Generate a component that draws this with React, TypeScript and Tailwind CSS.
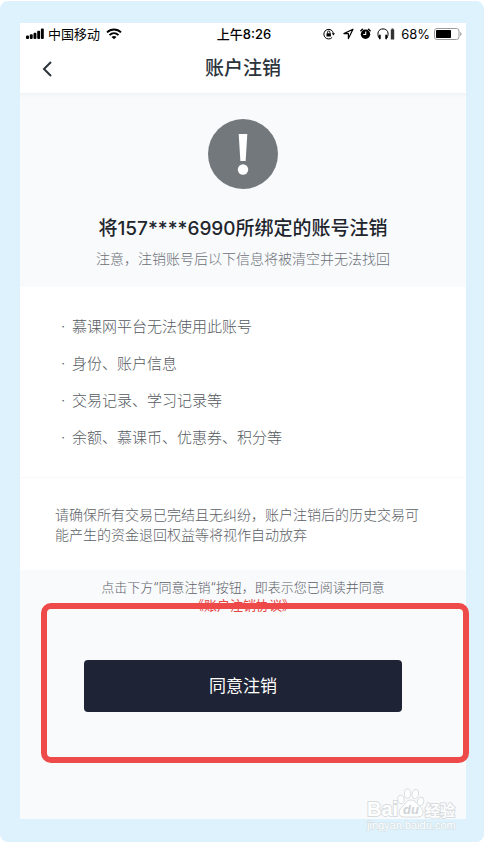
import React from "react";

const losses = [
  "慕课网平台无法使用此账号",
  "身份、账户信息",
  "交易记录、学习记录等",
  "余额、慕课币、优惠券、积分等",
];

function SignalIcon() {
  return (
    <svg width="18" height="12" viewBox="0 0 18 12" fill="currentColor" aria-hidden="true">
      <rect x="0" y="7.5" width="3" height="3.5" rx="1" />
      <rect x="3.8" y="6.3" width="2.9" height="4.7" rx="1" />
      <rect x="7.5" y="4.8" width="2.9" height="6.2" rx="1" />
      <rect x="11.2" y="2.8" width="2.9" height="8.2" rx="1" />
      <rect x="14.9" y="0.5" width="2.9" height="10.5" rx="1" />
    </svg>
  );
}

function WifiIcon() {
  return (
    <svg width="16" height="12" viewBox="0 0 16 12" aria-hidden="true">
      <g fill="none" stroke="currentColor" strokeWidth="1.9">
        <path d="M1 4.4C5 0.5 11 0.5 15 4.4" />
        <path d="M3.5 7.1C6.1 4.6 9.9 4.6 12.5 7.1" />
      </g>
      <path d="M8 11.2 5.5 8.9C6.9 7.6 9.1 7.6 10.5 8.9Z" fill="currentColor" />
    </svg>
  );
}

function RotationLockIcon() {
  return (
    <svg width="12" height="12" viewBox="0 0 12 12" fill="none" stroke="currentColor" aria-hidden="true">
      <path d="M9.2 9.4A4.8 4.8 0 1 1 10.4 5.4" strokeWidth="1" />
      <path d="M8.8 5.2H12L10.4 7.4Z" fill="currentColor" stroke="none" />
      <rect x="3.5" y="5.2" width="4.4" height="3.4" rx="0.4" fill="currentColor" stroke="none" />
      <path d="M4.5 5.4V4.2A1.2 1.2 0 0 1 6.9 4.2V5.4" strokeWidth="0.9" />
    </svg>
  );
}

function LocationIcon() {
  return (
    <svg width="11" height="12" viewBox="0 0 11 12" fill="none" stroke="currentColor" strokeWidth="1.2" strokeLinejoin="round" aria-hidden="true">
      <path d="M10 1.2 0.9 5.6H5.4V10.6Z" />
    </svg>
  );
}

function AlarmIcon() {
  return (
    <svg width="11" height="12" viewBox="0 0 11 12" aria-hidden="true">
      <circle cx="5.5" cy="6.2" r="4.7" fill="currentColor" />
      <path d="M0.9 2.8 2.5 1.2M10.1 2.8 8.5 1.2" stroke="currentColor" strokeWidth="1.5" strokeLinecap="round" />
      <path d="M5.7 3.4V6.5H3.2" fill="none" stroke="#fff" strokeWidth="1.1" />
    </svg>
  );
}

function HeadphonesIcon() {
  return (
    <svg width="18" height="12" viewBox="0 0 18 12" aria-hidden="true">
      <path d="M2 10C-0.5 5 1.6 0.9 6 0.9C10.4 0.9 12.5 5 10 10" fill="none" stroke="currentColor" strokeWidth="1" />
      <rect x="2" y="6.6" width="1.7" height="4.8" rx="0.8" fill="currentColor" />
      <rect x="8.3" y="6.6" width="1.7" height="4.8" rx="0.8" fill="currentColor" />
      <path d="M14.6 0.5H16.4V1.4H17.2V11.4H13.8V1.4H14.6Z" fill="#333" />
    </svg>
  );
}

function BatteryIcon() {
  return (
    <svg width="28" height="12" viewBox="0 0 28 12" aria-hidden="true">
      <rect x="0.5" y="0.5" width="24.5" height="11" rx="2.5" fill="none" stroke="#9b9b9b" />
      <rect x="2" y="2" width="15" height="8" rx="0.8" fill="currentColor" />
      <path d="M26.2 4V8Q27.6 7.4 27.6 6T26.2 4Z" fill="#9b9b9b" />
    </svg>
  );
}

function Watermark() {
  return (
    <svg
      className="pointer-events-none absolute right-6 bottom-2"
      width="94"
      height="48"
      viewBox="0 0 94 48"
      role="img"
      aria-label="Baidu 经验"
    >
      <g fill="#fdfefe" stroke="#d9dcde" strokeWidth="1" fontFamily="'Liberation Sans', 'Noto Sans CJK SC', sans-serif">
        <g paintOrder="stroke">
          <text x="1" y="30" fontSize="20" fontWeight="700" strokeWidth="1.8">Bai</text>
          <text x="59" y="30" fontSize="15" fontWeight="700" strokeWidth="1.8">经验</text>
          <text x="1" y="43" fontSize="11" strokeWidth="1.2" stroke="#d3dfe5">jingyan.baidu.com</text>
        </g>
        <ellipse cx="35" cy="13.500" rx="3.2" ry="4.3" transform="rotate(-12 35 13.500)" />
        <ellipse cx="41.5" cy="7.5" rx="3.2" ry="4.7" />
        <ellipse cx="49.3" cy="8" rx="3.2" ry="4.7" transform="rotate(12 49.3 8)" />
        <ellipse cx="54.5" cy="15.5" rx="3.2" ry="4.3" transform="rotate(20 54.5 15.5)" />
        <path d="M45 14C40.500 14 39.500 18 36.500 20.500C31.500 24.500 32 31 38 31H52C58 31 58.500 24.500 54 20.500C51 18 49.500 14 45 14Z" />
        <text x="37" y="28" fontSize="13" fontWeight="700" fontStyle="italic" fill="#cfd3d6" stroke="none">du</text>
      </g>
    </svg>
  );
}

export default function App() {
  return (
    <div className="flex min-h-screen flex-col bg-white pt-px font-['Inter','Noto_Sans_CJK_SC',sans-serif]">
      <div className="relative flex flex-1 flex-col rounded-lg bg-[#ddf2fc] pt-[22px] pr-[18px] pb-[23px] pl-5">
        <main className="flex flex-1 flex-col bg-white">
          <div className="grid h-[22px] grid-cols-[1fr_auto_1fr] items-center pr-1 pl-1.5 text-[13px] leading-[22px] text-black">
            <div className="flex items-center">
              <SignalIcon />
              <span className="ml-1 mr-1.5">中国移动</span>
              <WifiIcon />
            </div>
            <span className="font-medium">上午8:26</span>
            <div className="flex items-center justify-end">
              <RotationLockIcon />
              <span className="w-2" />
              <LocationIcon />
              <span className="w-1.5" />
              <AlarmIcon />
              <span className="w-1.5" />
              <HeadphonesIcon />
              <span className="ml-1.5 mr-1">68%</span>
              <BatteryIcon />
            </div>
          </div>

          <header className="grid h-12 grid-cols-[1fr_auto_1fr] items-center">
            <button type="button" aria-label="返回" className="ml-5 flex size-4 items-center justify-center text-[#2b333b]">
              <svg width="16" height="16" viewBox="0 0 16 16" fill="none" stroke="currentColor" strokeWidth="2" aria-hidden="true">
                <path d="M11 1 4 8l7 7" />
              </svg>
            </button>
            <h1 className="text-[19px] leading-6 font-medium text-[#2b333b]">账户注销</h1>
          </header>

          <section className="flex flex-col items-center bg-[#f8fafc] bg-linear-to-b from-[#f1f3f5] to-[#f8fafc] to-[5px] pt-[26px] pb-[18px]">
            <svg width="70" height="70" viewBox="0 0 70 70" aria-hidden="true">
              <circle cx="35" cy="35" r="35" fill="#73787d" />
              <path d="M30.7 15H39.3L37.6 42H32.4Z" fill="#fff" />
              <circle cx="35" cy="50.5" r="5.2" fill="#fff" />
            </svg>
            <h2 className="mt-7 text-[19px] leading-6 font-medium text-[#1f252c]">将157****6990所绑定的账号注销</h2>
            <p className="mt-2 text-sm leading-5 font-light text-[#6c7177]">注意，注销账号后以下信息将被清空并无法找回</p>
          </section>

          <ul className="flex flex-col gap-[17px] border-b border-[#f8f9fa] px-10 pt-[30px] pb-[29px] text-[15px] leading-5 font-light text-[#565b61]">
            {losses.map((item) => (
              <li key={item} className="flex">
                <span className="w-3 pl-px">·</span>
                <span>{item}</span>
              </li>
            ))}
          </ul>

          <p className="px-[35px] pt-[27px] pb-[25px] text-sm leading-5 font-light text-[#5c6167]">
            请确保所有交易已完结且无纠纷，账户注销后的历史交易可能产生的资金退回权益等将视作自动放弃
          </p>

          <footer className="flex-1 bg-[#f8fafc] pt-2">
            <p className="text-center text-[13px] leading-[18px] font-light text-[#5c6167]">
              点击下方“同意注销“按钮，即表示您已阅读并同意
              <br />
              <a href="#agreement" className="font-normal text-[#e8443f] [font-feature-settings:'halt']">
                《账户注销协议》
              </a>
            </p>
            <div className="relative mx-16 mt-[46px]">
              <button type="button" className="h-[52px] w-full rounded bg-[#1f2336] text-[17px] leading-6 text-white">
                同意注销
              </button>
              <div className="pointer-events-none absolute -top-[57px] -right-[67px] -bottom-[51px] -left-[43px] rounded-[10px] border-6 border-[#ee4a49]" />
            </div>
          </footer>
        </main>
        <Watermark />
      </div>
    </div>
  );
}
